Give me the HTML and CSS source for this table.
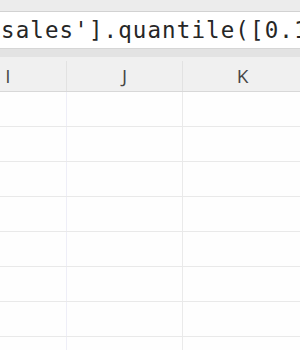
FILE: index.html
```html
<!DOCTYPE html>
<html lang="en">
<head>
<meta charset="utf-8">
<title>Sheet</title>
<link rel="stylesheet" href="styles.css">
</head>
<body>
<div class="app">
  <div class="topbar"></div>
  <div class="formula"><span class="code">sales'].quantile([0.1</span></div>
  <div class="strip"></div>
  <div class="grid">
    <div class="colhead">
      <div class="hcell">I</div>
      <div class="hcell">J</div>
      <div class="hcell">K</div>
    </div>
    <div class="row"><div class="cell c-i"></div><div class="cell c-j"></div><div class="cell c-k"></div></div>
    <div class="row"><div class="cell c-i"></div><div class="cell c-j"></div><div class="cell c-k"></div></div>
    <div class="row"><div class="cell c-i"></div><div class="cell c-j"></div><div class="cell c-k"></div></div>
    <div class="row"><div class="cell c-i"></div><div class="cell c-j"></div><div class="cell c-k"></div></div>
    <div class="row"><div class="cell c-i"></div><div class="cell c-j"></div><div class="cell c-k"></div></div>
    <div class="row"><div class="cell c-i"></div><div class="cell c-j"></div><div class="cell c-k"></div></div>
    <div class="row"><div class="cell c-i"></div><div class="cell c-j"></div><div class="cell c-k"></div></div>
    <div class="row"><div class="cell c-i"></div><div class="cell c-j"></div><div class="cell c-k"></div></div>
  </div>
</div>
</body>
</html>
```
FILE: styles.css
```css
html, body {
  margin: 0;
  padding: 0;
  background: #ffffff;
  overflow: hidden;
}
.app {
  width: 300px;
  height: 350px;
  overflow: hidden;
  background: #fefefe;
}
.topbar {
  height: 11px;
  background: #ececec;
  border-bottom: 1px solid #d2d2d2;
}
.formula {
  height: 36px;
  background: #ffffff;
  border-bottom: 1px solid #d6d6d6;
  display: flex;
  align-items: center;
  white-space: nowrap;
  overflow: hidden;
}
.code {
  font-family: "DejaVu Sans Mono", "Liberation Mono", monospace;
  font-size: 22.5px;
  letter-spacing: 1.1px;
  color: #262626;
  padding-left: 1px;
  line-height: 36px;
}
.strip {
  height: 8px;
  background: #e3e3e3;
}
.grid {
  margin-left: -50px;
  width: 400px;
}
.colhead {
  display: grid;
  grid-template-columns: 117px 116px 120px;
  background: #f0f0f0;
  padding-top: 4px;
  border-bottom: 1px solid #d8d8d8;
}
.hcell {
  height: 30px;
  display: flex;
  align-items: center;
  justify-content: center;
  font-family: "Open Sans", "Noto Sans", sans-serif;
  font-size: 19px;
  color: #474747;
  border-right: 1px solid #e2e2e2;
  box-sizing: border-box;
}
.row {
  display: grid;
  grid-template-columns: 117px 116px 120px;
  height: 34px;
  border-bottom: 1px solid #e9e9e9;
}
.cell {
  box-sizing: border-box;
  background: #fefefe;
}
.c-i {
  border-right: 1px solid #eeeef7;
}
.c-j {
  border-right: 1px solid #eaeaea;
}
```
